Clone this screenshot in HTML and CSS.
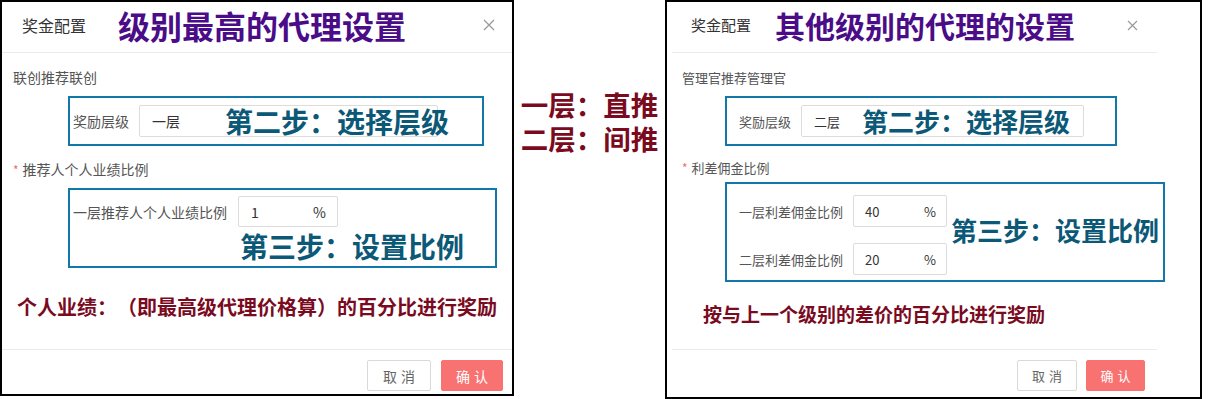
FILE: index.html
```html
<!DOCTYPE html>
<html>
	<head>
		<meta charset="UTF-8">
		<title>奖金配置</title>
		<link rel="stylesheet" href="styles.css">
	</head>
	<body>
		<div class="page">
			<!-- 级别最高的代理 -->
			<div class="dialog dialog-top">
				<div class="dlg-head">
					<span class="dlg-title">奖金配置</span>
					<span class="note-title">级别最高的代理设置</span>
					<i class="close"><svg width="12" height="12" viewBox="0 0 12 12"><path d="M1 1L11 11M11 1L1 11" stroke="#999" stroke-width="1.3" fill="none"/></svg></i>
				</div>
				<div class="dlg-body">
					<div class="field-label">联创推荐联创</div>
					<div class="step-box box-level">
						<label>奖励层级</label>
						<div class="input input-level">一层</div>
						<span class="note-step">第二步：选择层级</span>
					</div>
					<div class="field-label"><em>*</em>推荐人个人业绩比例</div>
					<div class="step-box box-ratio">
						<div class="row">
							<label>一层推荐人个人业绩比例</label>
							<div class="input input-pct"><span>1</span><span>%</span></div>
						</div>
						<div class="note-step">第三步：设置比例</div>
					</div>
					<p class="note-desc">个人业绩：（即最高级代理价格算）的百分比进行奖励</p>
				</div>
				<div class="dlg-foot">
					<button class="btn btn-cancel">取消</button>
					<button class="btn btn-ok">确认</button>
				</div>
			</div>

			<div class="middle">
				<div>一层：直推</div>
				<div>二层：间推</div>
			</div>

			<!-- 其他级别的代理 -->
			<div class="dialog dialog-other">
				<div class="dlg-head">
					<span class="dlg-title">奖金配置</span>
					<span class="note-title">其他级别的代理的设置</span>
					<i class="close"><svg width="11" height="11" viewBox="0 0 11 11"><path d="M1 1L10 10M10 1L1 10" stroke="#999" stroke-width="1.2" fill="none"/></svg></i>
				</div>
				<div class="dlg-body">
					<div class="field-label">管理官推荐管理官</div>
					<div class="step-box box-level">
						<label>奖励层级</label>
						<div class="input input-level">二层</div>
						<span class="note-step">第二步：选择层级</span>
					</div>
					<div class="field-label"><em>*</em>利差佣金比例</div>
					<div class="step-box box-ratio">
						<div class="rows">
							<div class="row">
								<label>一层利差佣金比例</label>
								<div class="input input-pct"><span>40</span><span>%</span></div>
							</div>
							<div class="row">
								<label>二层利差佣金比例</label>
								<div class="input input-pct"><span>20</span><span>%</span></div>
							</div>
						</div>
						<div class="note-step">第三步：设置比例</div>
					</div>
					<p class="note-desc">按与上一个级别的差价的百分比进行奖励</p>
				</div>
				<div class="dlg-foot">
					<button class="btn btn-cancel">取消</button>
					<button class="btn btn-ok">确认</button>
				</div>
			</div>
		</div>
	</body>
</html>
```

FILE: styles.css
```css
html,body{
	margin: 0;
	padding: 0;
	background: #fff;
}
body{
	font-family: "Noto Sans CJK SC", "Liberation Sans", sans-serif;
	color: #555;
	text-spacing-trim: space-all;
}
p{
	margin: 0;
}
.page{
	display: flex;
	align-items: flex-start;
	width: 1213px;
	height: 399px;
}
.dialog{
	box-sizing: border-box;
	border: 2px solid #000;
	background: #fff;
}
.dlg-head{
	box-sizing: border-box;
	display: flex;
	align-items: center;
	height: 51px;
	padding-bottom: 4px;
	border-bottom: 1px solid #ebebeb;
}
.dlg-title{
	color: #333;
	line-height: 24px;
}
.note-title{
	color: #4b0c88;
	font-weight: bold;
	white-space: nowrap;
}
.close{
	display: block;
	margin-left: auto;
	line-height: 0;
}
.dlg-body{
	box-sizing: border-box;
	height: 296px;
}
.field-label{
	line-height: 20px;
	color: #555;
}
.field-label em{
	font-style: normal;
	color: #f56c6c;
	font-size: 12px;
	margin-right: 4px;
}
.step-box{
	box-sizing: border-box;
	border: 2px solid #1277a9;
	position: relative;
}
.box-level{
	display: flex;
	align-items: center;
	height: 50px;
}
.input{
	box-sizing: border-box;
	border: 1px solid #dcdcdc;
	border-radius: 2px;
	color: #333;
	display: flex;
	align-items: center;
	justify-content: space-between;
	background: #fff;
}
.note-step{
	color: #0b5877;
	font-weight: bold;
	white-space: nowrap;
}
.box-level .note-step{
	position: absolute;
}
.note-desc{
	color: #7a0b1f;
	font-weight: bold;
	white-space: nowrap;
}
.dlg-foot{
	display: flex;
	justify-content: flex-end;
	border-top: 1px solid #ebebeb;
	padding-top: 10px;
}
.btn{
	box-sizing: border-box;
	height: 31px;
	border-radius: 2px;
	font-family: inherit;
	letter-spacing: 4px;
	text-indent: 4px;
	padding: 0;
	cursor: pointer;
}
.btn-cancel{
	background: #fff;
	border: 1px solid #d9d9d9;
	color: #666;
}
.btn-ok{
	background: #f87272;
	border: 1px solid #f87272;
	color: #fff;
}
.middle{
	width: 151px;
	padding-top: 87px;
	text-align: center;
	color: #7a0b1f;
	font-weight: bold;
	font-size: 27.5px;
	line-height: 34px;
	white-space: nowrap;
}
.middle div{
	height: 34px;
}

/* 左侧：级别最高 */
.dialog-top{
	width: 514px;
	height: 396px;
}
.dialog-top .dlg-head{
	padding-left: 20px;
}
.dialog-top .dlg-title{
	font-size: 16px;
}
.dialog-top .note-title{
	font-size: 32px;
	line-height: 40px;
	margin-left: 32px;
}
.dialog-top .close{
	margin-right: 17px;
}
.dialog-top .dlg-body{
	padding: 14px 0 0 11px;
	font-size: 14px;
}
.dialog-top .box-level{
	margin: 9px 0 13px 55px;
	width: 416px;
	padding-left: 3px;
}
.dialog-top label{
	margin-right: 10px;
}
.dialog-top .input-level{
	width: 299px;
	height: 32px;
	padding-left: 12px;
}
.dialog-top .box-level .note-step{
	left: 155px;
	top: 7px;
	font-size: 28px;
	line-height: 32px;
}
.dialog-top .box-ratio{
	margin: 8px 0 0 55px;
	width: 429px;
	height: 80px;
	padding: 6px 0 0 3px;
}
.dialog-top .row{
	display: flex;
	align-items: center;
}
.dialog-top .row label{
	margin-right: 11px;
}
.dialog-top .input-pct{
	width: 100px;
	height: 31px;
	padding: 0 11px 0 12px;
}
.dialog-top .box-ratio .note-step{
	margin: 4px 0 0 167px;
	font-size: 28px;
	line-height: 30px;
}
.dialog-top .note-desc{
	margin: 24px 0 0 4px;
	font-size: 20px;
	line-height: 30px;
}
.dialog-top .dlg-foot{
	padding-right: 9px;
	gap: 10px;
}
.dialog-top .btn{
	font-size: 14px;
}
.dialog-top .btn-cancel{
	width: 64px;
}
.dialog-top .btn-ok{
	width: 62px;
}

/* 右侧：其他级别 */
.dialog-other{
	width: 537px;
	height: 399px;
}
.dialog-other .dlg-head,
.dialog-other .dlg-foot{
	margin: 0 43px 0 5px;
}
.dialog-other .dlg-head{
	padding-left: 19px;
}
.dialog-other .dlg-title{
	font-size: 15px;
}
.dialog-other .note-title{
	font-size: 30px;
	line-height: 38px;
	margin-left: 24px;
}
.dialog-other .close{
	margin-right: 19px;
}
.dialog-other .dlg-body{
	padding: 15px 0 0 15px;
	font-size: 13px;
}
.dialog-other .box-level{
	margin: 8px 0 12px 43px;
	width: 392px;
	padding-left: 12px;
}
.dialog-other label{
	margin-right: 10px;
}
.dialog-other .input-level{
	width: 283px;
	height: 32px;
	padding-left: 12px;
}
.dialog-other .box-level .note-step{
	left: 135px;
	top: 8px;
	font-size: 26px;
	line-height: 30px;
}
.dialog-other .box-ratio{
	display: flex;
	align-items: flex-start;
	margin: 4px 0 0 43px;
	width: 440px;
	height: 100px;
	padding: 11px 0 0 12px;
}
.dialog-other .rows{
	display: flex;
	flex-direction: column;
	gap: 16px;
}
.dialog-other .row{
	display: flex;
	align-items: center;
}
.dialog-other .input-pct{
	width: 94px;
	height: 32px;
	padding: 0 10px 0 11px;
}
.dialog-other .box-ratio .note-step{
	margin: 20px 0 0 4px;
	font-size: 26px;
	line-height: 30px;
}
.dialog-other .note-desc{
	margin: 19px 0 0 21px;
	font-size: 19px;
	line-height: 26px;
}
.dialog-other .dlg-foot{
	padding-right: 12px;
	gap: 9px;
}
.dialog-other .btn{
	font-size: 13px;
}
.dialog-other .btn-cancel{
	width: 60px;
}
.dialog-other .btn-ok{
	width: 59px;
}
```
